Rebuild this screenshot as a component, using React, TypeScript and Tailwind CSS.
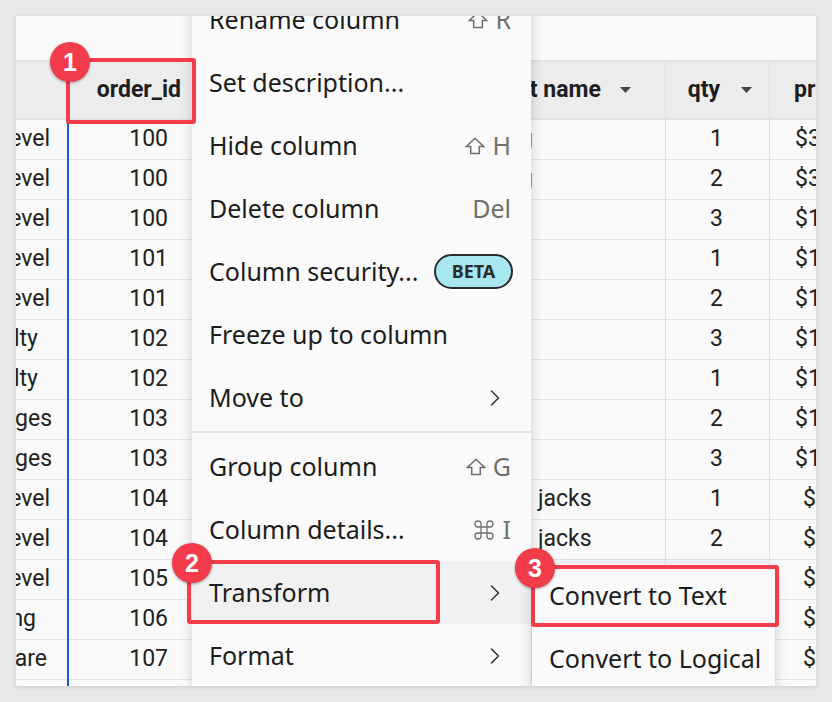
import React from "react";
import { Command, ChevronRight } from "lucide-react";

type Row = {
  l: string;
  lp: string;
  id: string;
  name: string;
  np: string;
  qty: string;
  price: string;
  pp: string;
};

const rows: Row[] = [
  { l: "Entry Level", lp: "pr-[17px]", id: "100", name: "g", np: "pl-[330px]", qty: "1", price: "$35.00", pp: "pl-[25px]" },
  { l: "Entry Level", lp: "pr-[17px]", id: "100", name: "g", np: "pl-[330px]", qty: "2", price: "$35.00", pp: "pl-[25px]" },
  { l: "Entry Level", lp: "pr-[17px]", id: "100", name: "", np: "pl-[331px]", qty: "3", price: "$120.00", pp: "pl-[25px]" },
  { l: "Entry Level", lp: "pr-[17px]", id: "101", name: "", np: "pl-[331px]", qty: "1", price: "$140.00", pp: "pl-[25px]" },
  { l: "Entry Level", lp: "pr-[17px]", id: "101", name: "", np: "pl-[331px]", qty: "2", price: "$150.00", pp: "pl-[25px]" },
  { l: "Specialty", lp: "pr-[29px]", id: "102", name: "", np: "pl-[331px]", qty: "3", price: "$110.00", pp: "pl-[25px]" },
  { l: "Specialty", lp: "pr-[29px]", id: "102", name: "", np: "pl-[331px]", qty: "1", price: "$130.00", pp: "pl-[25px]" },
  { l: "Bridges", lp: "pr-[15px]", id: "103", name: "", np: "pl-[331px]", qty: "2", price: "$160.00", pp: "pl-[25px]" },
  { l: "Bridges", lp: "pr-[15px]", id: "103", name: "", np: "pl-[331px]", qty: "3", price: "$170.00", pp: "pl-[25px]" },
  { l: "Entry Level", lp: "pr-[17px]", id: "104", name: "jacks", np: "pl-[348px]", qty: "1", price: "$9.00", pp: "pl-[33px]" },
  { l: "Entry Level", lp: "pr-[17px]", id: "104", name: "jacks", np: "pl-[348px]", qty: "2", price: "$9.00", pp: "pl-[33px]" },
  { l: "Entry Level", lp: "pr-[17px]", id: "105", name: "", np: "pl-[348px]", qty: "1", price: "$8.00", pp: "pl-[33px]" },
  { l: "Tubing", lp: "pr-[31px]", id: "106", name: "", np: "pl-[348px]", qty: "1", price: "$6.00", pp: "pl-[33px]" },
  { l: "Hardware", lp: "pr-[20px]", id: "107", name: "", np: "pl-[348px]", qty: "1", price: "$5.00", pp: "pl-[33px]" },
  { l: "Hardware", lp: "pr-[20px]", id: "108", name: "", np: "pl-[348px]", qty: "1", price: "$5.00", pp: "pl-[33px]" },
];

function Caret() {
  return (
    <svg width="11" height="6" viewBox="0 0 11 6" className="shrink-0">
      <path d="M0 0H11L5.5 6Z" fill="#444" />
    </svg>
  );
}

function ShiftIcon() {
  return (
    <svg width="20" height="18" viewBox="0 0 20 18" className="shrink-0">
      <path
        d="M10 1.2 L18.8 9.6 H14.3 V16.4 H5.7 V9.6 H1.2 Z"
        fill="none"
        stroke="#6f6f6f"
        strokeWidth="1.5"
        strokeLinejoin="miter"
      />
    </svg>
  );
}

function Shortcut({ k, kind }: { k: string; kind: "shift" | "cmd" | "none" }) {
  return (
    <div className="ml-auto flex items-center gap-[7px] text-[#6f6f6f]">
      {kind === "shift" && <ShiftIcon />}
      {kind === "cmd" && <Command size={24} strokeWidth={1.3} color="#6f6f6f" />}
      <span>{k}</span>
    </div>
  );
}

function Chevron() {
  return (
    <div className="ml-auto flex items-center">
      <ChevronRight size={28} strokeWidth={1.3} color="#333" />
    </div>
  );
}

type Item =
  | { type: "divider" }
  | {
      type: "item";
      label: string;
      right?: React.ReactNode;
      active?: boolean;
      pr?: string;
    };

const items: Item[] = [
  { type: "item", label: "Rename column", right: <Shortcut k="R" kind="shift" /> },
  { type: "item", label: "Set description..." },
  { type: "item", label: "Hide column", right: <Shortcut k="H" kind="shift" /> },
  { type: "item", label: "Delete column", right: <Shortcut k="Del" kind="none" /> },
  {
    type: "item",
    label: "Column security...",
    pr: "pr-[18px]",
    right: (
      <div className="ml-auto flex h-[35px] w-[79px] items-center justify-center rounded-full border-2 border-[#2b2b2b] bg-[#a9e7f0] text-[18px] font-bold text-[#2b2b2b]">
        BETA
      </div>
    ),
  },
  { type: "item", label: "Freeze up to column" },
  { type: "item", label: "Move to", right: <Chevron />, pr: "pr-[22px]" },
  { type: "divider" },
  { type: "item", label: "Group column", right: <Shortcut k="G" kind="shift" /> },
  { type: "item", label: "Column details...", right: <Shortcut k="I" kind="cmd" /> },
  { type: "item", label: "Transform", right: <Chevron />, active: true, pr: "pr-[22px]" },
  { type: "item", label: "Format", right: <Chevron />, pr: "pr-[22px]" },
];

function Badge({ n, cls }: { n: string; cls: string }) {
  return (
    <div
      className={`absolute flex h-[40px] w-[40px] items-center justify-center rounded-full bg-[#f23b4b] font-['Liberation_Sans',sans-serif] text-[25px] font-bold leading-none text-white shadow-[0_1px_3px_rgba(0,0,0,0.35)] ${cls}`}
    >
      {n}
    </div>
  );
}

export default function App() {
  return (
    <div className="relative h-[702px] w-[832px] overflow-hidden bg-[#e8e8e8] p-4">
      <div className="relative h-[670px] w-[800px] overflow-hidden bg-[#fafafa] font-['Roboto',sans-serif] text-[23px] text-[#222] shadow-[0_1px_4px_rgba(0,0,0,0.12)]">
        <div className="h-[44px]" />
        {/* header */}
        <div className="flex h-[60px] border-y-2 border-[#e2e2e2] bg-[#ececec] font-bold text-[#1e1e1e]">
          <div className="w-[51px] shrink-0" />
          <div className="flex w-[123px] shrink-0 items-center justify-end border-l-2 border-[#e0e0e0] pr-[9px]">
            order_id
          </div>
          <div className="flex w-[475px] shrink-0 items-center whitespace-nowrap pl-[268px]">
            <span>product name</span>
            <span className="ml-[19px] flex">
              <Caret />
            </span>
          </div>
          <div className="flex w-[104px] shrink-0 items-center justify-end border-l border-[#e0e0e0] pr-[17px]">
            <span>qty</span>
            <span className="ml-[21px] flex">
              <Caret />
            </span>
          </div>
          <div className="flex w-[200px] shrink-0 items-center whitespace-nowrap border-l border-[#e0e0e0] pl-[24px]">
            <span>price</span>
            <span className="ml-[19px] flex">
              <Caret />
            </span>
          </div>
        </div>
        {/* rows */}
        {rows.map((r, i) => (
          <div key={i} className="flex h-[40px]">
            <div className={`flex w-[51px] shrink-0 items-center justify-end overflow-hidden border-b border-[#e5e5e5] ${r.lp}`}>
              <span className="shrink-0 whitespace-nowrap">{r.l}</span>
            </div>
            <div className="flex w-[123px] shrink-0 border-l-2 border-[#1b5bd9]">
              <div className="flex flex-1 items-center justify-end border-b border-[#e5e5e5] pr-[22px]">{r.id}</div>
            </div>
            <div className={`flex w-[475px] shrink-0 items-center whitespace-nowrap border-b border-[#e5e5e5] ${r.np}`}>
              {r.name}
            </div>
            <div className="flex w-[104px] shrink-0 items-center justify-end border-b border-l border-[#e3e3e3] pr-[46px]">
              {r.qty}
            </div>
            <div className={`flex w-[200px] shrink-0 items-center whitespace-nowrap border-b border-l border-[#e3e3e3] ${r.pp}`}>
              {r.price}
            </div>
          </div>
        ))}

        {/* context menu */}
        <div className="absolute left-[176px] top-[-28px] w-[339px] bg-[#fafafa] font-['Noto_Sans',sans-serif] text-[25px] text-[#1c1c1c] shadow-[0_3px_12px_rgba(0,0,0,0.18)]">
          {items.map((it, i) =>
            it.type === "divider" ? (
              <div key={i} className="my-[2px] h-[2px] bg-[#e4e4e4]" />
            ) : (
              <div
                key={i}
                className={`flex h-[63px] items-center whitespace-nowrap pl-[17px] ${it.pr ?? "pr-[20px]"} ${it.active ? "bg-[#f1f1f1]" : ""}`}
              >
                <span>{it.label}</span>
                {it.right}
              </div>
            )
          )}
        </div>

        {/* submenu */}
        <div className="absolute left-[516px] top-[548px] w-[243px] bg-[#fafafa] font-['Noto_Sans',sans-serif] text-[25px] text-[#1c1c1c] shadow-[0_3px_12px_rgba(0,0,0,0.2)]">
          <div className="flex h-[63px] items-center whitespace-nowrap pl-[17px]">Convert to Text</div>
          <div className="flex h-[63px] items-center whitespace-nowrap pl-[17px]">Convert to Logical</div>
        </div>
      </div>

      {/* annotations */}
      <div className="absolute left-[66px] top-[58px] h-[66px] w-[130px] rounded-[3px] border-4 border-[#f23b4b]" />
      <Badge n="1" cls="left-[50px] top-[42px]" />
      <div className="absolute left-[187px] top-[560px] h-[64px] w-[253px] rounded-[3px] border-4 border-[#f23b4b]" />
      <Badge n="2" cls="left-[172px] top-[543px]" />
      <div className="absolute left-[531px] top-[565px] h-[62px] w-[248px] rounded-[3px] border-4 border-[#f23b4b]" />
      <Badge n="3" cls="left-[515px] top-[548px]" />
    </div>
  );
}
